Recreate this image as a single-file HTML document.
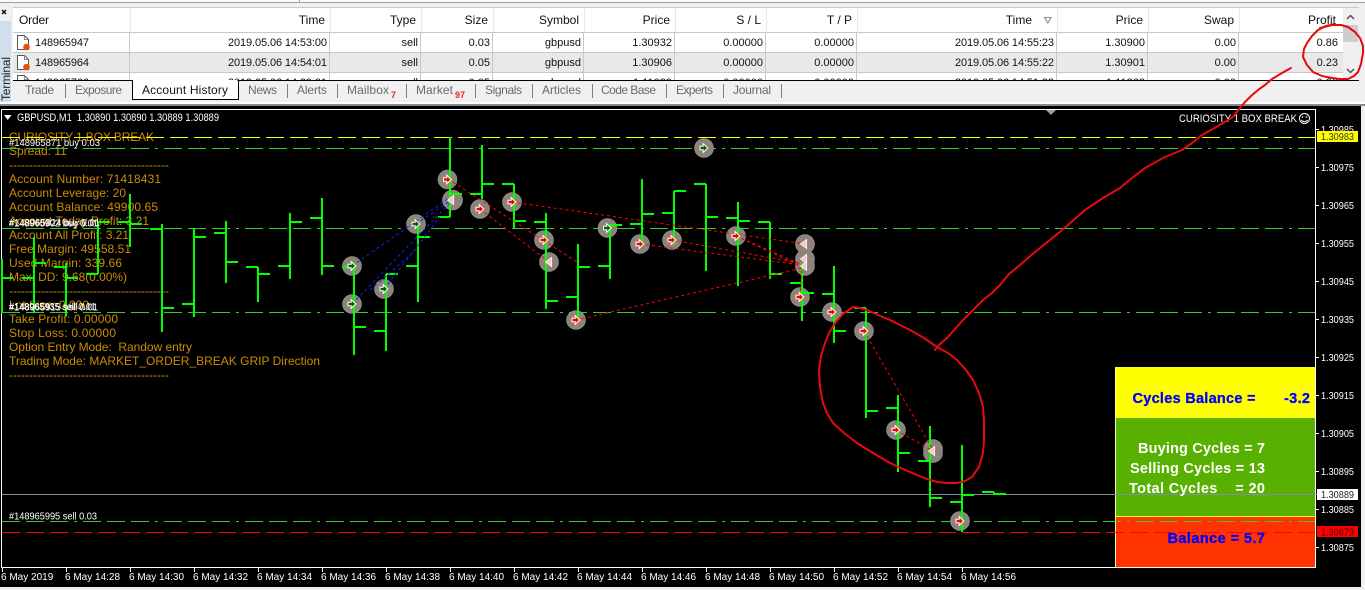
<!DOCTYPE html>
<html><head><meta charset="utf-8"><title>Terminal</title>
<style>
html,body{margin:0;padding:0;background:#f0f0f0;width:1365px;height:590px;overflow:hidden}
svg{display:block;font-family:"Liberation Sans",Arial,sans-serif}
.h{font-size:12px;fill:#111;text-anchor:end}
.r{font-size:11px;fill:#111;text-anchor:end}
.t{font-size:12px;fill:#6a6a6a}
.o{font-size:12px;fill:#cc8c04}
.l{font-size:10.5px;fill:#fff}
.p{font-size:10.5px;fill:#fff}
.x{font-size:10px;fill:#fff}
.b{font-size:14.5px;font-weight:bold}
</style></head><body>
<svg width="1365" height="590" viewBox="0 0 1365 590" xmlns="http://www.w3.org/2000/svg">
<defs>
<clipPath id="tbl"><rect x="13" y="8" width="1330" height="72"/></clipPath>
<g id="ra"><path d="M-4-1.800H-.8V-4.300L3.800 0-.8 4.300V1.800H-4Z" fill="#f00" stroke="#fff" stroke-width="1"/></g>
<g id="ga"><path d="M-4-1.800H-.8V-4.300L3.800 0-.8 4.300V1.800H-4Z" fill="#006400" stroke="#fff" stroke-width="1"/></g>
<g id="pt"><path d="M-3.600 0L2.700-4.700V4.700Z" fill="#ffc0cb" stroke="#fff" stroke-width=".7"/></g>
<g id="doc"><path d="M1.500 .5H8.500L12.500 4.500V14.500H1.500Z" fill="#fff" stroke="#555"/><path d="M8.500 .5V4.500H12.500" fill="none" stroke="#888"/><circle cx="10.500" cy="12" r="3.300" fill="#e8500f"/></g>
</defs>

<!-- top frame -->
<rect width="1365" height="590" fill="#f0f0f0"/>
<rect x="0" y="0" width="1365" height="2" fill="#fafafa"/>
<rect x="0" y="2" width="1365" height="1" fill="#a0a0a0"/>
<rect x="299" y="0" width="1" height="2" fill="#a0a0a0"/>
<path d="M2 10L6 14M6 10L2 14" stroke="#111" stroke-width="1.500"/>
<rect x="0" y="21" width="11" height="82" fill="#cfdfed"/>
<text transform="translate(10 101) rotate(-90)" font-size="12" fill="#222" textLength="44">Terminal</text>

<!-- table -->
<rect x="13" y="8" width="1330" height="72" fill="#fff"/>
<rect x="13" y="53" width="1330" height="20" fill="#e9e9e9"/>
<path d="M13 7.500H1359M13 32.500H1343M13 52.500H1343M13 72.500H1343" stroke="#c8c8c8" shape-rendering="crispEdges"/>
<path d="M130.500 8V32M330.500 8V32M421.500 8V32M493.500 8V32M584.500 8V32M675.500 8V32M766.500 8V32M857.500 8V32M1057.500 8V32M1148.500 8V32M1239.500 8V32" stroke="#e8e8e8" shape-rendering="crispEdges"/>
<path d="M129.500 33V80M329.500 33V80M420.500 33V80M492.500 33V80M583.500 33V80M674.500 33V80M765.500 33V80M856.500 33V80M1056.500 33V80M1147.500 33V80M1238.500 33V80" stroke="#c8c8c8" shape-rendering="crispEdges"/>
<text x="19" y="24" font-size="12" fill="#111" textLength="30">Order</text>
<text class="h" x="325" y="24">Time</text><text class="h" x="416" y="24">Type</text><text class="h" x="488" y="24">Size</text><text class="h" x="579" y="24">Symbol</text><text class="h" x="670" y="24">Price</text><text class="h" x="761" y="24">S / L</text><text class="h" x="852" y="24">T / P</text><text class="h" x="1032" y="24">Time</text><text class="h" x="1143" y="24">Price</text><text class="h" x="1234" y="24">Swap</text><text class="h" x="1336" y="24">Profit</text>
<path d="M1044.500 17.500H1051L1047.800 23Z" fill="none" stroke="#888"/>

<g clip-path="url(#tbl)">
<use href="#doc" x="16" y="35"/><use href="#doc" x="16" y="55"/><use href="#doc" x="16" y="75"/>
<g font-size="11" fill="#111"><text x="35" y="46" textLength="54">148965947</text><text x="35" y="66" textLength="54">148965964</text><text x="35" y="86" textLength="54">148965766</text></g>
<text class="r" x="327" y="46" textLength="99">2019.05.06 14:53:00</text><text class="r" x="418" y="46">sell</text><text class="r" x="490" y="46">0.03</text><text class="r" x="581" y="46">gbpusd</text><text class="r" x="672" y="46">1.30932</text><text class="r" x="763" y="46">0.00000</text><text class="r" x="854" y="46">0.00000</text><text class="r" x="1054" y="46" textLength="99">2019.05.06 14:55:23</text><text class="r" x="1145" y="46">1.30900</text><text class="r" x="1236" y="46">0.00</text><text class="r" x="1338" y="46">0.86</text>
<text class="r" x="327" y="66" textLength="99">2019.05.06 14:54:01</text><text class="r" x="418" y="66">sell</text><text class="r" x="490" y="66">0.05</text><text class="r" x="581" y="66">gbpusd</text><text class="r" x="672" y="66">1.30906</text><text class="r" x="763" y="66">0.00000</text><text class="r" x="854" y="66">0.00000</text><text class="r" x="1054" y="66" textLength="99">2019.05.06 14:55:22</text><text class="r" x="1145" y="66">1.30901</text><text class="r" x="1236" y="66">0.00</text><text class="r" x="1338" y="66">0.23</text>
<text class="r" x="327" y="86" textLength="99">2019.05.06 14:39:01</text><text class="r" x="418" y="86">sell</text><text class="r" x="490" y="86">0.05</text><text class="r" x="581" y="86">gbpusd</text><text class="r" x="672" y="86">1.11089</text><text class="r" x="763" y="86">0.00000</text><text class="r" x="854" y="86">0.00000</text><text class="r" x="1054" y="86" textLength="99">2019.05.06 14:51:33</text><text class="r" x="1145" y="86">1.11868</text><text class="r" x="1236" y="86">0.00</text><text class="r" x="1338" y="86">0.00</text>
</g>

<!-- scrollbar -->
<rect x="1343" y="8" width="16" height="72" fill="#f0f0f0"/>
<rect x="1343" y="25" width="15" height="17" fill="#cdcdcd"/>
<path d="M1347 19L1350.500 15.500 1354 19M1347 69L1350.500 72.500 1354 69" fill="none" stroke="#555" stroke-width="1.500"/>

<!-- tabs -->
<rect x="13" y="81" width="1346" height="21" fill="#f0f0f0"/>
<rect x="13" y="80" width="1346" height="1" fill="#000"/>
<path d="M132.500 80V99.500H238V80" fill="#fff" stroke="#000"/>
<rect x="132" y="99" width="107" height="1" fill="#000"/>
<rect x="238" y="81" width="1" height="19" fill="#000"/>
<rect x="133" y="81" width="105" height="18" fill="#fff"/>
<text x="142" y="94" font-size="12" fill="#111" textLength="86">Account History</text>
<text class="t" x="25" y="94" textLength="29">Trade</text><text class="t" x="75" y="94" textLength="47">Exposure</text><text class="t" x="248" y="94" textLength="29">News</text><text class="t" x="297" y="94" textLength="30">Alerts</text><text class="t" x="347" y="94" textLength="42">Mailbox</text><text class="t" x="416" y="94" textLength="37">Market</text><text class="t" x="485" y="94" textLength="37">Signals</text><text class="t" x="542" y="94" textLength="39">Articles</text><text class="t" x="601" y="94" textLength="55">Code Base</text><text class="t" x="676" y="94" textLength="37">Experts</text><text class="t" x="733" y="94" textLength="38">Journal</text>
<text x="391" y="98" font-size="9" font-weight="bold" fill="#f02020">7</text>
<text x="455" y="98" font-size="9" font-weight="bold" fill="#f02020">97</text>
<path d="M65.500 84V98M287.500 84V98M337.500 84V98M406.500 84V98M475.500 84V98M532.500 84V98M592.500 84V98M666.500 84V98M723.500 84V98M781.500 84V98" stroke="#808080" shape-rendering="crispEdges"/>
<rect x="0" y="102" width="1365" height="2" fill="#fff"/>
<rect x="0" y="104" width="1365" height="2" fill="#8c8c8c"/>

<!-- chart -->
<rect x="0" y="106" width="1361" height="481" fill="#000"/>
<path d="M1.500 109.500H1315.500V567.500H1.500Z" fill="none" stroke="#fff" shape-rendering="crispEdges"/>
<path d="M1046 110H1056L1051 115Z" fill="#8fa0b0"/>
<path d="M4 115H11.500L7.750 120Z" fill="#fff"/>
<text x="17" y="121" font-size="11" fill="#fff" xml:space="preserve" textLength="202" lengthAdjust="spacingAndGlyphs">GBPUSD,M1  1.30890 1.30890 1.30889 1.30889</text>
<text x="1179" y="122" font-size="11" fill="#fff" textLength="118" lengthAdjust="spacingAndGlyphs">CURIOSITY 1 BOX BREAK</text>
<g fill="none" stroke="#fff"><circle cx="1304.500" cy="118.500" r="5"/><path d="M1301.500 120Q1304.500 123.500 1307.500 120"/></g>
<circle cx="1302.500" cy="117" r=".8" fill="#fff"/><circle cx="1306.500" cy="117" r=".8" fill="#fff"/>

<!-- info panel (orange text) -->
<text class="o" x="9" y="141" textLength="145">CURIOSITY 1 BOX BREAK</text>
<text class="o" x="9" y="155">Spread: 11</text>
<text class="o" x="9" y="169" textLength="160">----------------------------------------</text>
<text class="o" x="9" y="183" textLength="152">Account Number: 71418431</text>
<text class="o" x="9" y="197" textLength="117">Account Leverage: 20</text>
<text class="o" x="9" y="211" textLength="149">Account Balance: 49900.65</text>
<text class="o" x="9" y="225" textLength="140">Account Today Profit: 3.21</text>
<text class="o" x="9" y="239" textLength="120">Account All Profit: 3.21</text>
<text class="o" x="9" y="253" textLength="122">Free Margin: 49558.51</text>
<text class="o" x="9" y="267" textLength="113">Used Margin: 339.66</text>
<text class="o" x="9" y="281" textLength="118">Max. DD: 9.68(0.00%)</text>
<text class="o" x="9" y="295" textLength="160">----------------------------------------</text>
<text class="o" x="9" y="309" textLength="80">Lot Size: 0.000</text>
<text class="o" x="9" y="323" textLength="109">Take Profit: 0.00000</text>
<text class="o" x="9" y="337" textLength="107">Stop Loss: 0.00000</text>
<text class="o" x="9" y="351" textLength="183">Option Entry Mode:&#160; Randow entry</text>
<text class="o" x="9" y="365" textLength="311">Trading Mode: MARKET_ORDER_BREAK GRIP Direction</text>
<text class="o" x="9" y="379" textLength="160">----------------------------------------</text>

<!-- cycle panels -->
<rect x="1115" y="367" width="200" height="51" fill="#ffff00"/>
<rect x="1115" y="418" width="200" height="98" fill="#58b000"/>
<rect x="1115" y="516" width="200" height="1" fill="#ffff00"/>
<rect x="1115" y="517" width="200" height="50" fill="#ff3300"/>
<rect x="1115" y="367" width="1" height="200" fill="#ffffa0"/>

<!-- horizontal lines -->
<g shape-rendering="crispEdges" fill="none">
<path d="M2 137.500H1315" stroke="#ffff00" stroke-dasharray="18 6"/>
<path d="M2 148.500H1315M2 228.500H1315M2 312.500H1315" stroke="#32cd32" stroke-dasharray="18 6 18 6 18 6 3 6"/>
<path d="M2 521.500H1315" stroke="#32cd32" stroke-dasharray="18 6 18 6 18 6 3 6"/>
<path d="M2 532.500H1315" stroke="#f00" stroke-dasharray="18 6"/>
<path d="M2 494.500H1319" stroke="#8090a0"/>
</g>

<!-- circles -->
<g fill="#8e8378" stroke="#8f98a2" stroke-width=".6">
<circle cx="352" cy="266" r="9.500"/><circle cx="352" cy="304" r="9.500"/><circle cx="384" cy="289" r="9.500"/><circle cx="416" cy="224" r="9.500"/><circle cx="452.500" cy="200" r="10"/><circle cx="447.500" cy="179.500" r="9.500"/><circle cx="480" cy="209" r="9.500"/><circle cx="512" cy="202" r="9.500"/><circle cx="544" cy="240" r="9.500"/><circle cx="549" cy="262" r="9.500"/><circle cx="576" cy="320" r="9.500"/><circle cx="607.500" cy="228" r="9.500"/><circle cx="704" cy="148" r="9.500"/><circle cx="640" cy="244" r="9.500"/><circle cx="672" cy="240" r="9.500"/><circle cx="736" cy="236" r="9.500"/><circle cx="800" cy="297" r="9.500"/><circle cx="832" cy="312" r="9.500"/><circle cx="864" cy="331" r="9.500"/><circle cx="805" cy="244" r="9.500"/><circle cx="805" cy="259" r="9.500"/><circle cx="805" cy="266" r="9.500"/><circle cx="896" cy="430" r="9.500"/><circle cx="933" cy="449" r="9.500"/><circle cx="933" cy="453" r="9.500"/><circle cx="960" cy="521" r="9.500"/>
</g>

<!-- bars -->
<path fill="none" stroke="#00ff00" stroke-width="2" shape-rendering="crispEdges" d="M2 259V313M2 278H13M34 237V313M22 278H34M34 263H46M66 263V316M54 267H66M66 278H78M98 222V274M86 274H98M98 222H110M130 194V247M118 222H130M130 224H142M162 224V332M150 229H162M162 308H174M194 228V317M182 304H194M194 237H206M226 221V283M214 233H226M226 262H238M258 267V302M246 267H258M258 274H270M290 213V279M278 266H290M290 222H302M322 198V275M310 218H322M322 266H334M354 262V355M342 267H354M354 327H366M386 274V351M374 331H386M386 274H398M418 227V302M406 266H418M418 237H430M450 137V217M438 217H450M450 194H462M482 145V199M470 194H482M482 184H494M514 184V228M502 184H514M514 221H526M546 213V309M534 222H546M546 301H558M578 244V320M566 297H578M578 267H590M610 225V279M598 266H610M610 225H622M642 179V243M630 224H642M642 214H654M674 191V245M662 213H674M674 191H686M706 184V271M694 184H706M706 217H718M738 202V286M726 218H738M738 221H750M770 222V279M758 222H770M770 274H782M802 262V321M790 283H802M802 293H814M834 266V343M822 294H834M834 331H846M866 308V418M854 308H866M866 411H878M898 395V472M886 408H898M898 453H910M930 426V507M918 461H930M930 498H942M962 445V532M950 502H962M962 495H974M994 492V494M982 492H994M994 494H1006"/>

<!-- dotted order links -->
<g fill="none" stroke-width="1" stroke-dasharray="3 3">
<g stroke="#1020ff"><path d="M352 266L449 198M352 304L449 204M384 289L440 217M370 290L416 250M416 224L450 201"/></g>
<g stroke="#f00"><path d="M448 179L577 262M480 209L549 262M512 202L805 244M640 244L802 265M672 240L800 263M736 236L802 267M576 320L802 268M800 297L802 268M864 331L933 450M896 430L933 451M736 236L805 266"/></g>
</g>

<!-- arrows -->
<use href="#ga" x="352" y="266"/><use href="#ga" x="352" y="304"/><use href="#ga" x="384" y="289"/><use href="#ga" x="416" y="224"/><use href="#ga" x="607.500" y="228"/><use href="#ga" x="704" y="148"/>
<use href="#ra" x="447.500" y="179.500"/><use href="#ra" x="480" y="209"/><use href="#ra" x="512" y="202"/><use href="#ra" x="544" y="240"/><use href="#ra" x="576" y="320"/><use href="#ra" x="640" y="244"/><use href="#ra" x="672" y="240"/><use href="#ra" x="736" y="236"/><use href="#ra" x="800" y="297"/><use href="#ra" x="832" y="312"/><use href="#ra" x="864" y="331"/><use href="#ra" x="896" y="430"/><use href="#ra" x="960" y="521"/>
<use href="#pt" x="451" y="200"/><use href="#pt" x="549" y="262"/><use href="#pt" x="804" y="244"/><use href="#pt" x="804" y="259"/><use href="#pt" x="804" y="266"/><use href="#pt" x="932" y="451"/>

<!-- order labels -->
<text class="l" x="9" y="146" textLength="91" lengthAdjust="spacingAndGlyphs">#148965871 buy 0.03</text>
<text class="l" x="9" y="226" textLength="91" lengthAdjust="spacingAndGlyphs">#148965824 buy 0.01</text>
<text class="l" x="9" y="226.500" textLength="89" lengthAdjust="spacingAndGlyphs">#148965902 buy 0.01</text>
<text class="l" x="9" y="310" textLength="87" lengthAdjust="spacingAndGlyphs">#148965935 sell 0.01</text>
<text class="l" x="9" y="310.500" textLength="89" lengthAdjust="spacingAndGlyphs">#148965915 sell 0.01</text>
<text class="l" x="9" y="519.500" textLength="88" lengthAdjust="spacingAndGlyphs">#148965995 sell 0.03</text>

<!-- panel text -->
<text class="b" x="1132.500" y="403" fill="#0000ff" stroke="#0000ff" stroke-width=".3" textLength="123">Cycles Balance =</text>
<text class="b" x="1284" y="403" fill="#0000ff" stroke="#0000ff" stroke-width=".3" textLength="26">-3.2</text>
<text class="b" x="1138" y="453" fill="#fff" textLength="127">Buying Cycles = 7</text>
<text class="b" x="1130" y="473" fill="#fff" textLength="135">Selling Cycles = 13</text>
<text class="b" x="1129" y="493" fill="#fff" xml:space="preserve" textLength="136">Total Cycles    = 20</text>
<text class="b" x="1167.500" y="543" fill="#0000ff" stroke="#0000ff" stroke-width=".3" textLength="97.500">Balance = 5.7</text>

<!-- price axis -->
<path d="M1316 129.500H1319M1316 167.500H1319M1316 205.500H1319M1316 243.500H1319M1316 281.500H1319M1316 319.500H1319M1316 357.500H1319M1316 395.500H1319M1316 433.500H1319M1316 471.500H1319M1316 509.500H1319M1316 547.500H1319" stroke="#fff" shape-rendering="crispEdges"/>
<text class="p" x="1321" y="133" textLength="33" lengthAdjust="spacingAndGlyphs">1.30985</text><text class="p" x="1321" y="171" textLength="33" lengthAdjust="spacingAndGlyphs">1.30975</text><text class="p" x="1321" y="209" textLength="33" lengthAdjust="spacingAndGlyphs">1.30965</text><text class="p" x="1321" y="247" textLength="33" lengthAdjust="spacingAndGlyphs">1.30955</text><text class="p" x="1321" y="285" textLength="33" lengthAdjust="spacingAndGlyphs">1.30945</text><text class="p" x="1321" y="323" textLength="33" lengthAdjust="spacingAndGlyphs">1.30935</text><text class="p" x="1321" y="361" textLength="33" lengthAdjust="spacingAndGlyphs">1.30925</text><text class="p" x="1321" y="399" textLength="33" lengthAdjust="spacingAndGlyphs">1.30915</text><text class="p" x="1321" y="437" textLength="33" lengthAdjust="spacingAndGlyphs">1.30905</text><text class="p" x="1321" y="475" textLength="33" lengthAdjust="spacingAndGlyphs">1.30895</text><text class="p" x="1321" y="513" textLength="33" lengthAdjust="spacingAndGlyphs">1.30885</text><text class="p" x="1321" y="551" textLength="33" lengthAdjust="spacingAndGlyphs">1.30875</text>
<rect x="1317" y="131" width="41" height="11" fill="#ffff00"/>
<text x="1321" y="140" font-size="10.500" fill="#333" textLength="33" lengthAdjust="spacingAndGlyphs">1.30983</text>
<rect x="1317" y="489" width="41" height="11" fill="#fff"/>
<text x="1321" y="498" font-size="10.500" fill="#222" textLength="33" lengthAdjust="spacingAndGlyphs">1.30889</text>
<rect x="1317" y="526" width="41" height="11" fill="#ff0000"/>
<text x="1321" y="535.500" font-size="10.500" fill="#5a0000" textLength="33" lengthAdjust="spacingAndGlyphs">1.30879</text>

<!-- time axis -->
<path d="M2.500 568V572M66.500 568V572M130.500 568V572M194.500 568V572M258.500 568V572M322.500 568V572M386.500 568V572M450.500 568V572M514.500 568V572M578.500 568V572M642.500 568V572M706.500 568V572M770.500 568V572M834.500 568V572M898.500 568V572M962.500 568V572" stroke="#fff" shape-rendering="crispEdges"/>
<text class="x" x="1" y="580">6 May 2019</text>
<text class="x" x="65" y="580">6 May 14:28</text><text class="x" x="129" y="580">6 May 14:30</text><text class="x" x="193" y="580">6 May 14:32</text><text class="x" x="257" y="580">6 May 14:34</text><text class="x" x="321" y="580">6 May 14:36</text><text class="x" x="385" y="580">6 May 14:38</text><text class="x" x="449" y="580">6 May 14:40</text><text class="x" x="513" y="580">6 May 14:42</text><text class="x" x="577" y="580">6 May 14:44</text><text class="x" x="641" y="580">6 May 14:46</text><text class="x" x="705" y="580">6 May 14:48</text><text class="x" x="769" y="580">6 May 14:50</text><text class="x" x="833" y="580">6 May 14:52</text><text class="x" x="897" y="580">6 May 14:54</text><text class="x" x="961" y="580">6 May 14:56</text>

<!-- hand drawn annotations -->
<g fill="none" stroke="#e60a10" stroke-width="2" stroke-linejoin="round" stroke-linecap="round">
<polyline points="1320,28 1332,25 1341,25 1348,27 1355,32 1360,38 1363,46 1363,53 1361,64 1358,72 1354,76 1348,79 1340,79 1332,78 1322,76 1313,72 1307,65 1303,57 1304,49 1307,43 1312,36 1318,30 1326,26 1335,24"/>
<polyline points="1291,68 1282,73 1272,79 1265,85 1258,90 1251,96 1245,102 1239,109 1233,117 1218,126 1202,135 1192,143 1182,150 1165,157 1145,168 1132,178 1120,188 1103,198 1085,210 1068,225 1050,240 1035,252 1020,265 1009,274 1000,285 992,293 983,300 973,310 963,320 955,329 947,338 940,344 935,350"/>
<polyline points="853,307 860,308 867,310 878,315 890,320 900,325 910,330 924,338 937,347 948,353 957,360 966,370 973,380 979,393 983,407 984,420 984,440 983,453 979,467 972,477 965,481 957,483 947,483 937,482 927,479 917,475 903,469 890,463 873,453 857,443 844,433 833,423 827,413 823,403 820,387 819,370 821,356 825,343 829,333 835,323 843,314 853,307"/>
</g>
</svg>
</body></html>
